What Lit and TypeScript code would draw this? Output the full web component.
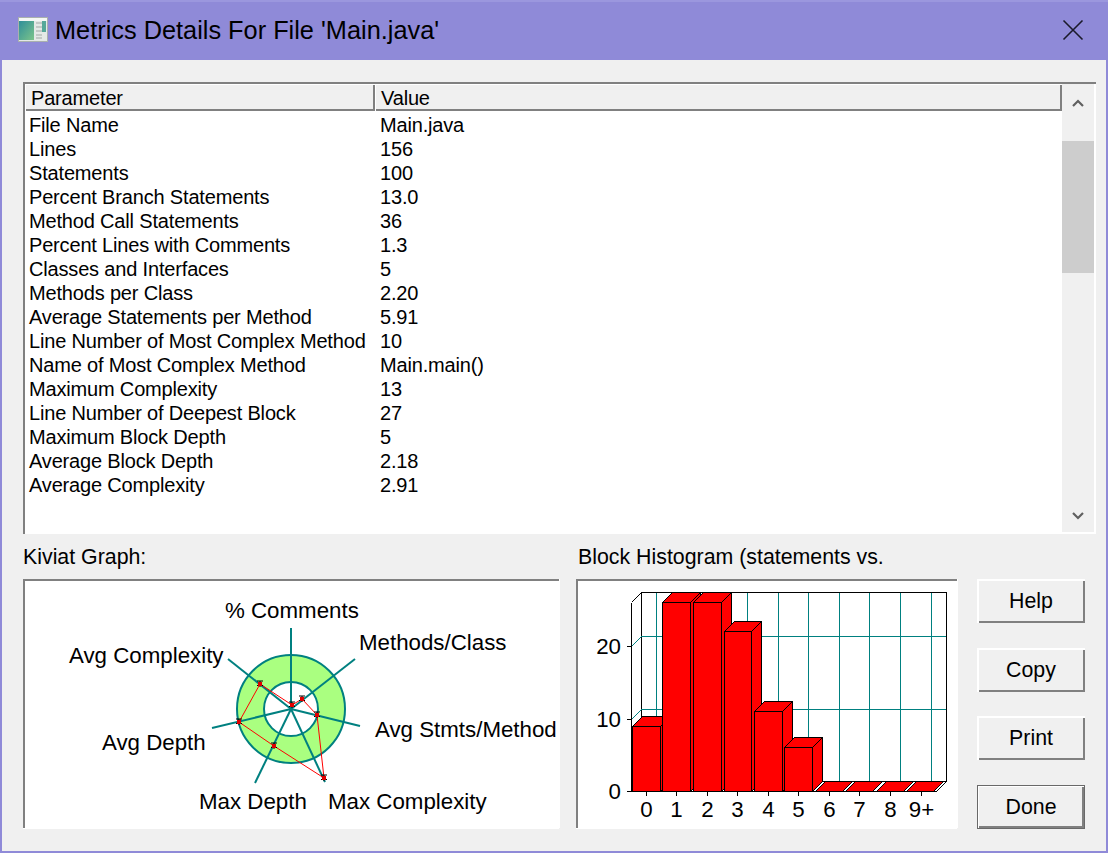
import { LitElement, html, css, svg } from "lit";
import { customElement } from "lit/decorators.js";

const rows: [string, string][] = [
  ["File Name", "Main.java"], ["Lines", "156"], ["Statements", "100"],
  ["Percent Branch Statements", "13.0"], ["Method Call Statements", "36"],
  ["Percent Lines with Comments", "1.3"], ["Classes and Interfaces", "5"],
  ["Methods per Class", "2.20"], ["Average Statements per Method", "5.91"],
  ["Line Number of Most Complex Method", "10"], ["Name of Most Complex Method", "Main.main()"],
  ["Maximum Complexity", "13"], ["Line Number of Deepest Block", "27"],
  ["Maximum Block Depth", "5"], ["Average Block Depth", "2.18"], ["Average Complexity", "2.91"],
];

const C = [291, 709];
const spokes = [[291, 628], [355, 659], [360, 726], [325, 782], [255, 783], [212, 728], [228, 659]];
const pts = [[260, 684], [292, 705], [302, 699], [317, 715], [324, 778], [274, 746], [239, 722]];
const labels: [string, number, number][] = [
  ["% Comments", 225, 618], ["Methods/Class", 359, 650], ["Avg Stmts/Method", 375, 737],
  ["Max Complexity", 328, 809], ["Max Depth", 199, 809], ["Avg Depth", 102, 750], ["Avg Complexity", 69, 663],
];

const bars = [
  [632, 660, 726], [662, 690, 602], [693, 721, 602], [724, 751, 631],
  [754, 782, 711], [784, 812, 747], [815, 842, 791], [845, 872, 791], [876, 903, 791], [906, 933, 791],
];
const xTicks = [646, 676, 707, 737, 768, 798, 829, 859, 890, 921];
const xLabels = ["0", "1", "2", "3", "4", "5", "6", "7", "8", "9+"];
const vGrid = [656, 686, 717, 747, 778, 808, 839, 869, 900, 931];

@customElement("app-root")
export class AppRoot extends LitElement {
  static styles = css`
    :host { display: block; width: 1108px; height: 853px; background: #8f8ad8; font-family: "Liberation Sans", Arial, sans-serif; color: #000; overflow: hidden; }
    .win { display: flex; flex-direction: column; height: 851px; padding: 0 2px; box-sizing: border-box; }
    .title { height: 60px; flex: none; display: flex; align-items: center; gap: 7px; font-size: 25.33px; box-shadow: inset 0 2px 0 #9b97de; position: relative; margin: 0 -2px; padding-left: 18px; }
    .title svg.icon { flex: none; }
    .close { position: absolute; left: 1062px; top: 19px; }
    .body { flex: 1; background: #f0f0f0; padding: 22px 10px 0 21px; display: flex; flex-direction: column; }
    .top { height: 452px; box-sizing: border-box; background: #fff; display: flex; box-shadow: inset 2px 2px 0 #808080, inset -2px -2px 0 #fff; padding: 2px; }
    .list { flex: 1; min-width: 0; font-size: 20px; letter-spacing: -.17px; }
    .head { display: grid; grid-template-columns: 350px 1fr; height: 27px; margin-bottom: 2px; }
    .hc { background: #f0f0f0; box-shadow: inset 1px 1px 0 #fff, inset -2px -2px 0 #808080; display: flex; align-items: center; padding: 2px 0 0 6px; box-sizing: border-box; }
    .row { display: grid; grid-template-columns: 350px 1fr; height: 24px; align-items: center; white-space: nowrap; }
    .row span:first-child { padding-left: 4px; }
    .row span:last-child { padding-left: 5px; }
    .sb { width: 32px; flex: none; background: #f0f0f0; display: flex; flex-direction: column; }
    .arrow { height: 57px; box-sizing: border-box; padding-top: 15px; display: flex; justify-content: center; align-items: flex-start; }
    .arrow.down { height: 32px; padding-top: 0; align-items: center; margin-top: auto; }
    .arrow svg { display: block; }
    .thumb { height: 132px; background: #cdcdcd; }
    .sb .spacer { flex: 1; }
    .bottom { display: grid; grid-template-columns: 536px 381px 108px; column-gap: 17px; margin-top: 11px; }
    .bottom > :nth-child(3) { margin-left: 3px; }
    .cap { font-size: 21.33px; height: 34px; line-height: 24px; white-space: nowrap; overflow: hidden; }
    .cap.h { padding-left: 2px; }
    .frame { height: 249px; background: #fff; box-shadow: inset 2px 2px 0 #808080, 0 1px 0 #fff, 1px 0 0 #fff; }
    .frame svg { display: block; }
    .btns { display: flex; flex-direction: column; gap: 25px; padding-top: 34px; }
    button { height: 44px; width: 108px; flex: none; padding: 0; font: 21.33px "Liberation Sans", Arial, sans-serif; color: #000; background: #f0f0f0; border: 0; box-shadow: inset 2px 2px 0 #fff, inset -2px -2px 0 #808080; }
    button:nth-child(3) { margin-top: -1px; }
    button.def { box-shadow: inset 0 0 0 1px #696969, inset 2px 2px 0 #fff, inset -3px -3px 0 #808080; }
    text { font-family: "Liberation Sans", Arial, sans-serif; fill: #000; }
  `;

  private kiviat() {
    const poly = pts.map((p) => p.join(",")).join(" ");
    return html`<svg width="536" height="249" viewBox="23 579 536 249">
      <circle cx="291" cy="709" r="54" fill="#aaff80" stroke="#008080" stroke-width="2"/>
      <circle cx="291" cy="709" r="27" fill="#fff" stroke="#008080" stroke-width="2"/>
      ${spokes.map((s) => svg`<line x1=${C[0]} y1=${C[1]} x2=${s[0]} y2=${s[1]} stroke="#008080" stroke-width="2"/>`)}
      <polygon points=${poly} fill="none" stroke="#f00" stroke-width="1"/>
      ${pts.map((p) => svg`<path d="M${p[0] - 3} ${p[1] - 3}H${p[0] + 3}M${p[0]} ${p[1] - 3}V${p[1] + 3}M${p[0] - 3} ${p[1] + 2}L${p[0]} ${p[1] - 1}L${p[0] + 3} ${p[1] + 2}" stroke="#000" stroke-width="1" fill="none"/><rect x=${p[0] - 2} y=${p[1] - 2} width="4" height="4" fill="#e00000"/>`)}
      ${labels.map((l) => svg`<text x=${l[1]} y=${l[2]} font-size="22.3">${l[0]}</text>`)}
    </svg>`;
  }

  private hist() {
    return html`<svg width="381" height="249" viewBox="576 579 381 249" shape-rendering="crispEdges">
      <rect x="641.5" y="592.5" width="305" height="189" fill="#fff" stroke="#000"/>
      ${vGrid.map((x) => svg`<line x1=${x + 0.5} y1="593" x2=${x + 0.5} y2="781" stroke="#008080"/>`)}
      <path d="M642 636.5H946M642 709.5H946" stroke="#008080" fill="none"/>
      <path d="M631.5 646.5L641.5 636.5M631.5 719.5L641.5 709.5" stroke="#008080" fill="none"/>
      <path d="M631.5 602.5V791.5M631.5 602.5L641.5 592.5M631.5 791.5L641.5 781.5H946.5L936.5 791.5H631.5" stroke="#000" fill="none"/>
      <path d="M627 646.5H632M627 719.5H632M627 791.5H632" stroke="#000" fill="none"/>
      ${xTicks.map((x) => svg`<line x1=${x + 0.5} y1="791" x2=${x + 0.5} y2="796" stroke="#000"/>`)}
      ${bars.map(([a, b, t]) => svg`
        <path d="M${a + 0.5} ${t + 0.5}L${a + 10.5} ${t - 9.5}H${b + 10.5}V781.5L${b + 0.5} 791.5V${t + 0.5}Z" fill="#f00" stroke="#000"/>
        <rect x=${a + 0.5} y=${t + 0.5} width=${b - a} height=${791 - t} fill="#f00" stroke="#000"/>
        <path d="M${b + 0.5} ${t + 0.5}L${b + 10.5} ${t - 9.5}" stroke="#000" fill="none"/>`)}
      <text x="621" y="654" font-size="22.3" text-anchor="end">20</text>
      <text x="621" y="727" font-size="22.3" text-anchor="end">10</text>
      <text x="621" y="799" font-size="22.3" text-anchor="end">0</text>
      ${xLabels.map((l, i) => svg`<text x=${xTicks[i] + 0.5} y="817" font-size="22.3" text-anchor="middle">${l}</text>`)}
    </svg>`;
  }

  render() {
    return html`<div class="win">
      <div class="title">
        <svg class="icon" width="30" height="26" viewBox="0 0 30 26">
          <defs><linearGradient id="g" x1="0" y1="0" x2="1" y2="1"><stop offset="0" stop-color="#2f8f9a"/><stop offset="1" stop-color="#7cc48a"/></linearGradient></defs>
          <rect x="0.5" y="0.5" width="29" height="24" fill="#e4e9e6" stroke="#a9b0ae"/>
          <rect x="1" y="1" width="28" height="3" fill="#f4f7f5"/>
          <rect x="1" y="4" width="15" height="19" fill="url(#g)"/>
          <path d="M18 6h6M18 10h6M18 14h6M18 18h6M18 21h6" stroke="#b8bfbc" stroke-width="1.5"/>
          <rect x="24" y="4" width="4" height="11" fill="#55a89a"/>
        </svg>
        <span>Metrics Details For File 'Main.java'</span>
        <svg class="close" width="22" height="22" viewBox="0 0 22 22"><path d="M1.5 1.5L20.5 20.5M20.5 1.5L1.5 20.5" stroke="#1a1a2a" stroke-width="1.6"/></svg>
      </div>
      <div class="body">
        <div class="top">
          <div class="list">
            <div class="head"><div class="hc">Parameter</div><div class="hc">Value</div></div>
            ${rows.map((r) => html`<div class="row"><span>${r[0]}</span><span>${r[1]}</span></div>`)}
          </div>
          <div class="sb">
            <div class="arrow"><svg width="12" height="8" viewBox="0 0 12 8"><path d="M1 7L6 2L11 7" fill="none" stroke="#606060" stroke-width="2.2"/></svg></div>
            <div class="thumb"></div>
            <div class="spacer"></div>
            <div class="arrow down"><svg width="12" height="8" viewBox="0 0 12 8"><path d="M1 1L6 6L11 1" fill="none" stroke="#606060" stroke-width="2.2"/></svg></div>
          </div>
        </div>
        <div class="bottom">
          <div><div class="cap">Kiviat Graph:</div><div class="frame">${this.kiviat()}</div></div>
          <div><div class="cap h">Block Histogram (statements vs.</div><div class="frame">${this.hist()}</div></div>
          <div class="btns">
            <button>Help</button><button>Copy</button><button>Print</button><button class="def">Done</button>
          </div>
        </div>
      </div>
    </div>`;
  }
}
